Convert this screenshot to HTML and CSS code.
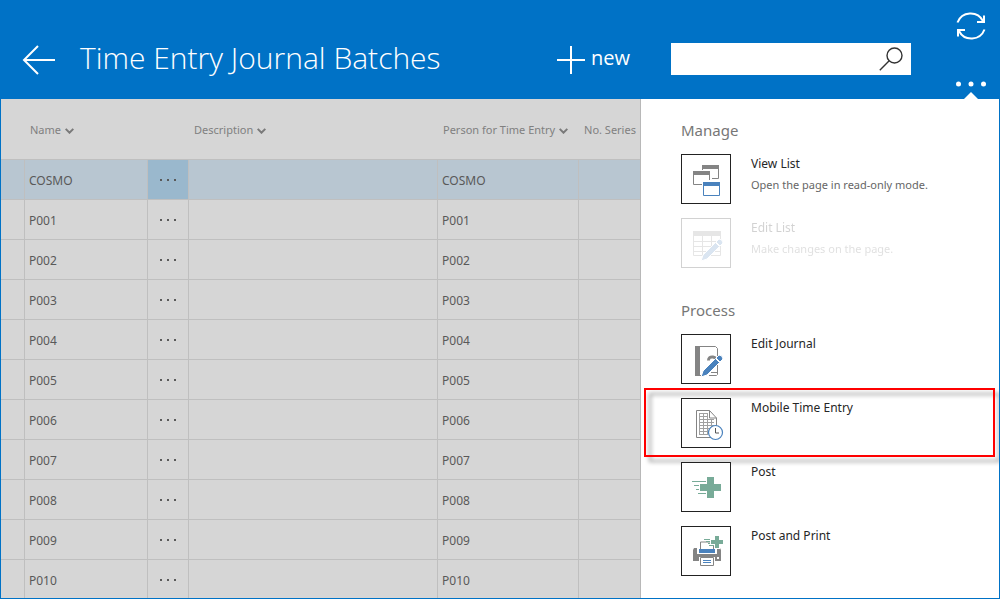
FILE: index.html
```html
<!DOCTYPE html>
<html lang="en">
<head>
<meta charset="utf-8">
<title>Time Entry Journal Batches</title>
<link rel="stylesheet" href="styles.css">
</head>
<body>
<div class="app">
  <header class="topbar">
    <button class="icon-button back" aria-label="Back">
      <svg width="34" height="30" viewBox="0 0 34 30" fill="none" stroke="#fff" stroke-width="2"><path d="M1.500 15H33M16 1 2 15l14 14"/></svg>
    </button>
    <h1 class="title">Time Entry Journal Batches</h1>
    <button class="new-button">
      <svg width="28" height="28" viewBox="0 0 28 28" stroke="#fff" stroke-width="2"><path d="M14 0v28M0 14h28"/></svg>
      <span>new</span>
    </button>
    <form class="search" role="search">
      <input class="search-input" type="search" aria-label="Search">
      <button class="icon-button" type="button" aria-label="Search">
        <svg width="24" height="24" viewBox="0 0 24 24" fill="none" stroke="#333" stroke-width="1.400"><circle cx="15.500" cy="8.500" r="7.500"/><path d="M10.200 13.800.800 23.200"/></svg>
      </button>
    </form>
    <div class="tools">
      <button class="icon-button" aria-label="Refresh">
        <svg width="30" height="30" viewBox="0 0 30 30" fill="none" stroke="#fff" stroke-width="2"><path d="M1.500 11.500A14 14 0 0 1 27 10M28.500 18.500A14 14 0 0 1 3 20"/><path d="M28 4.500V11h-7M2 25.500V19h7"/></svg>
      </button>
      <button class="icon-button more" aria-label="More actions" aria-expanded="true">
        <svg width="30" height="6" viewBox="0 0 30 6" fill="#fff"><circle cx="2.500" cy="3" r="2.500"/><circle cx="15" cy="3" r="2.500"/><circle cx="27.500" cy="3" r="2.500"/></svg>
      </button>
    </div>
  </header>
  <div class="content">
    <main class="list">
      <table class="grid">
        <colgroup><col class="c-mark"><col class="c-name"><col class="c-menu"><col class="c-desc"><col class="c-person"><col></colgroup>
        <thead>
          <tr>
            <th></th>
            <th colspan="2">Name <svg class="chev" width="9" height="6" viewBox="0 0 9 6"><path d="m.700.900 3.800 3.800L8.300.900"/></svg></th>
            <th>Description <svg class="chev" width="9" height="6" viewBox="0 0 9 6"><path d="m.700.900 3.800 3.800L8.300.900"/></svg></th>
            <th>Person for Time Entry <svg class="chev" width="9" height="6" viewBox="0 0 9 6"><path d="m.700.900 3.800 3.800L8.300.900"/></svg></th>
            <th>No. Series</th>
          </tr>
        </thead>
        <tbody>
          <tr class="selected"><td></td><td>COSMO</td><td class="menu"><button class="row-menu" aria-label="Row menu"><i></i><i></i><i></i></button></td><td></td><td>COSMO</td><td></td></tr>
          <tr><td></td><td>P001</td><td class="menu"><button class="row-menu" aria-label="Row menu"><i></i><i></i><i></i></button></td><td></td><td>P001</td><td></td></tr>
          <tr><td></td><td>P002</td><td class="menu"><button class="row-menu" aria-label="Row menu"><i></i><i></i><i></i></button></td><td></td><td>P002</td><td></td></tr>
          <tr><td></td><td>P003</td><td class="menu"><button class="row-menu" aria-label="Row menu"><i></i><i></i><i></i></button></td><td></td><td>P003</td><td></td></tr>
          <tr><td></td><td>P004</td><td class="menu"><button class="row-menu" aria-label="Row menu"><i></i><i></i><i></i></button></td><td></td><td>P004</td><td></td></tr>
          <tr><td></td><td>P005</td><td class="menu"><button class="row-menu" aria-label="Row menu"><i></i><i></i><i></i></button></td><td></td><td>P005</td><td></td></tr>
          <tr><td></td><td>P006</td><td class="menu"><button class="row-menu" aria-label="Row menu"><i></i><i></i><i></i></button></td><td></td><td>P006</td><td></td></tr>
          <tr><td></td><td>P007</td><td class="menu"><button class="row-menu" aria-label="Row menu"><i></i><i></i><i></i></button></td><td></td><td>P007</td><td></td></tr>
          <tr><td></td><td>P008</td><td class="menu"><button class="row-menu" aria-label="Row menu"><i></i><i></i><i></i></button></td><td></td><td>P008</td><td></td></tr>
          <tr><td></td><td>P009</td><td class="menu"><button class="row-menu" aria-label="Row menu"><i></i><i></i><i></i></button></td><td></td><td>P009</td><td></td></tr>
          <tr><td></td><td>P010</td><td class="menu"><button class="row-menu" aria-label="Row menu"><i></i><i></i><i></i></button></td><td></td><td>P010</td><td></td></tr>
        </tbody>
      </table>
    </main>
    <aside class="panel">
      <section class="group">
        <h2 class="group-title">Manage</h2>
        <button class="action">
          <span class="tile"><svg viewBox="1 1 48 48" fill="none" stroke="#848484"><path fill="#848484" stroke="none" d="M21 11h17v4H21zM12 17h17v4H12z"/><path d="M37.500 15v9.500H31M21.500 15v1M12.500 21v9.500H21M28.500 21v5"/><path fill="#4a82bd" stroke="none" d="M22 28h17v4H22z"/><path stroke="#4a82bd" d="M22.500 32v9.500h16V32"/></svg></span>
          <span class="label"><span class="name">View List</span><span class="desc">Open the page in read-only mode.</span></span>
        </button>
        <button class="action" disabled>
          <span class="tile"><svg viewBox="1 1 48 48" fill="none" stroke="#848484"><path fill="#848484" stroke="none" d="M12 13h28v5H12z"/><path d="M12.500 18v19.500h27V18M12 23.500h28M12 28.500h28M12 33.500h28M21.500 18v20M30.500 18v20"/><path fill="#4a82bd" stroke="#fff" d="M20 43l2-6 12.500-12.500 4 4L26 41z"/><path fill="#4a82bd" stroke="#fff" d="m35 24 3-3q3.500 0 4 4l-3 3z"/></svg></span>
          <span class="label"><span class="name">Edit List</span><span class="desc">Make changes on the page.</span></span>
        </button>
      </section>
      <section class="group">
        <h2 class="group-title">Process</h2>
        <button class="action">
          <span class="tile"><svg viewBox="1 1 48 48" fill="none" stroke="#848484"><path fill="#848484" stroke="none" d="M14 12h5v30h-5z"/><path d="M19 12.500h15.500l2 2v26l-1 1H28M21 41.500h-2M30 38.500h7"/><path stroke-width="3" d="M27.500 26.500q0-4 4.500-3.500 5 1 2 5"/><path fill="#4a82bd" stroke="#fff" d="M20 43l2-6 12.500-12.500 4 4L26 41z"/><path fill="#4a82bd" stroke="#fff" d="m35 24 3-3q3.500 0 4 4l-3 3z"/></svg></span>
          <span class="label"><span class="name">Edit Journal</span></span>
        </button>
        <button class="action highlighted">
          <span class="tile"><svg viewBox="1 1 48 48" fill="none" stroke="#848484"><path d="M28.500 12.500h-13v27h20V20zV20h7"/><path stroke="#a0a0a0" d="M18 15.500h8M18 18.500h8M18 21.500h15M18 24.500h15M18 27.500h15M18 30.500h11M18 33.500h9M18 36.500h9M18.500 15v22M22.500 15v22M26.500 15v22M30.500 21v8"/><circle cx="34.500" cy="34.500" r="7" fill="#fff" stroke="#4a82bd" stroke-width="1.200"/><path stroke="#555" d="M34.500 30v5H38"/></svg></span>
          <span class="label"><span class="name">Mobile Time Entry</span></span>
        </button>
        <button class="action">
          <span class="tile"><svg viewBox="1 1 48 48" fill="#78ab98"><path d="M26 15h7v7h7v7h-7v7h-7v-7h-7v-7h7zM11 19h14v1H11zM13 23h5v1h-5zM15 27h3v1h-3zM17 31h8v1h-8z"/></svg></span>
          <span class="label"><span class="name">Post</span></span>
        </button>
        <button class="action">
          <span class="tile"><svg viewBox="1 1 48 48" fill="none"><path fill="#848484" d="M13 22h3v6h20v-6h3l1 2v11h-2H12V24z"/><path fill="#fff" stroke="#848484" d="M19.500 24v-8h10l3 4v4z"/><path fill="#4a82bd" d="M18 23h16v4H18z"/><path fill="#fff" d="M36 31h2v2h-2zM18 31h16v10H18z"/><path fill="#fff" stroke="#848484" d="M19.500 31.500h13v8h-13z"/><path stroke="#4a82bd" d="M22 34.500h8M22 36.500h8"/><path fill="#fff" d="M29 13h5V9h5v4h4v6h-4v4h-5v-4h-5z"/><path fill="#78ab98" d="M34 10h4v4h4v4h-4v4h-4v-4h-4v-4h4zM23 13h6v1h-6zM25 15h4v1h-4zM27 17h2v1h-2zM28 19h5v1h-5z"/></svg></span>
          <span class="label"><span class="name">Post and Print</span></span>
        </button>
      </section>
    </aside>
  </div>
</div>
</body>
</html>
```
FILE: styles.css
```css
* { box-sizing: border-box; }
body {
  margin: 0;
  font-family: "Noto Sans", "Open Sans", sans-serif;
  font-size: 12px;
  color: #595959;
}
button { font: inherit; color: inherit; background: none; border: 0; padding: 0; }
svg { display: block; }

.app {
  display: flex;
  flex-direction: column;
  height: 100vh;
  border: 1px solid #0072c6;
}

.topbar {
  display: flex;
  align-items: flex-start;
  flex: none;
  height: 98px;
  padding: 0 13px 0 21px;
  background: #0072c6;
  color: #fff;
  font-family: "Open Sans", "Noto Sans", sans-serif;
}
.back { margin: 44px 24px 0 0; }
.title {
  flex: 1;
  margin: 34px 0 0;
  font-size: 30px;
  line-height: 46px;
  font-weight: 300;
  white-space: nowrap;
}
.new-button {
  display: flex;
  gap: 6px;
  margin: 45px 41px 0 0;
  font-size: 20px;
  line-height: 24px;
}
.search {
  display: flex;
  align-items: center;
  width: 240px;
  height: 32px;
  margin: 42px 45px 0 0;
  padding-right: 8px;
  background: #fff;
}
.search-input {
  flex: 1;
  min-width: 0;
  height: 100%;
  padding: 0 8px;
  border: 0;
  font: inherit;
  outline: 0;
}
.tools {
  display: flex;
  flex-direction: column;
  justify-content: space-between;
  height: 100%;
  padding: 10px 0 0;
}
.more { position: relative; height: 18px; }
.more svg { margin-bottom: 12px; }
.more::after {
  content: "";
  position: absolute;
  left: 8px;
  bottom: 0;
  border: 7px solid transparent;
  border-top: 0;
  border-bottom-color: #fff;
}

.content { display: flex; flex: 1; min-height: 0; }
.list {
  flex: 1;
  min-width: 0;
  overflow: hidden;
  background: #d6d6d6;
  border-right: 1px solid #b8b8b8;
}
.grid {
  width: 100%;
  table-layout: fixed;
  border-collapse: separate;
  border-spacing: 0;
}
.c-mark { width: 24px; }
.c-name { width: 123px; }
.c-menu { width: 41px; }
.c-desc { width: 249px; }
.c-person { width: 141px; }
th, td { border-bottom: 1px solid #bfbfbf; text-align: left; white-space: nowrap; }
th { height: 61px; padding: 0 0 0 5px; font-size: 11px; font-weight: 400; color: #808080; }
td { height: 40px; padding: 2px 0 0 4px; border-right: 1px solid #bfbfbf; }
td:last-child { border-right: 0; }
.chev {
  display: inline-block;
  margin-left: 1px;
  fill: none;
  stroke: #7a7a7a;
  stroke-width: 2;
}
.selected td { background: #b8c6d1; }
.selected .menu { background: #9ab8cd; }
.menu { padding: 0; }
.row-menu { display: flex; gap: 5px; margin: 0 auto; padding: 12px 4px; }
.row-menu i { width: 2px; height: 2px; background: #595959; }

.panel {
  flex: none;
  width: 358px;
  padding: 19px 0 0 40px;
  overflow: hidden;
  background: #fff;
}
.group { display: flex; flex-direction: column; gap: 14px; margin-bottom: 30px; }
.group-title {
  margin: 0 0 -2px;
  font-size: 15px;
  line-height: 24px;
  font-weight: 400;
  color: #777;
}
.action { position: relative; display: flex; gap: 20px; text-align: left; }
.action:disabled { opacity: 0.2; }
.tile { flex: none; width: 50px; height: 50px; border: 1px solid #222; background: #fff; }
.label { display: flex; flex-direction: column; line-height: 20px; }
.name { color: #262626; }
.desc { margin-top: 1px; font-size: 11px; color: #666; }
.highlighted::before {
  content: "";
  position: absolute;
  inset: -10px 4px -9px -37px;
  border: 2px solid #f00;
  filter: drop-shadow(5px 5px 2px rgba(0, 0, 0, 0.4));
  pointer-events: none;
}
.highlighted .tile { position: relative; }
```
